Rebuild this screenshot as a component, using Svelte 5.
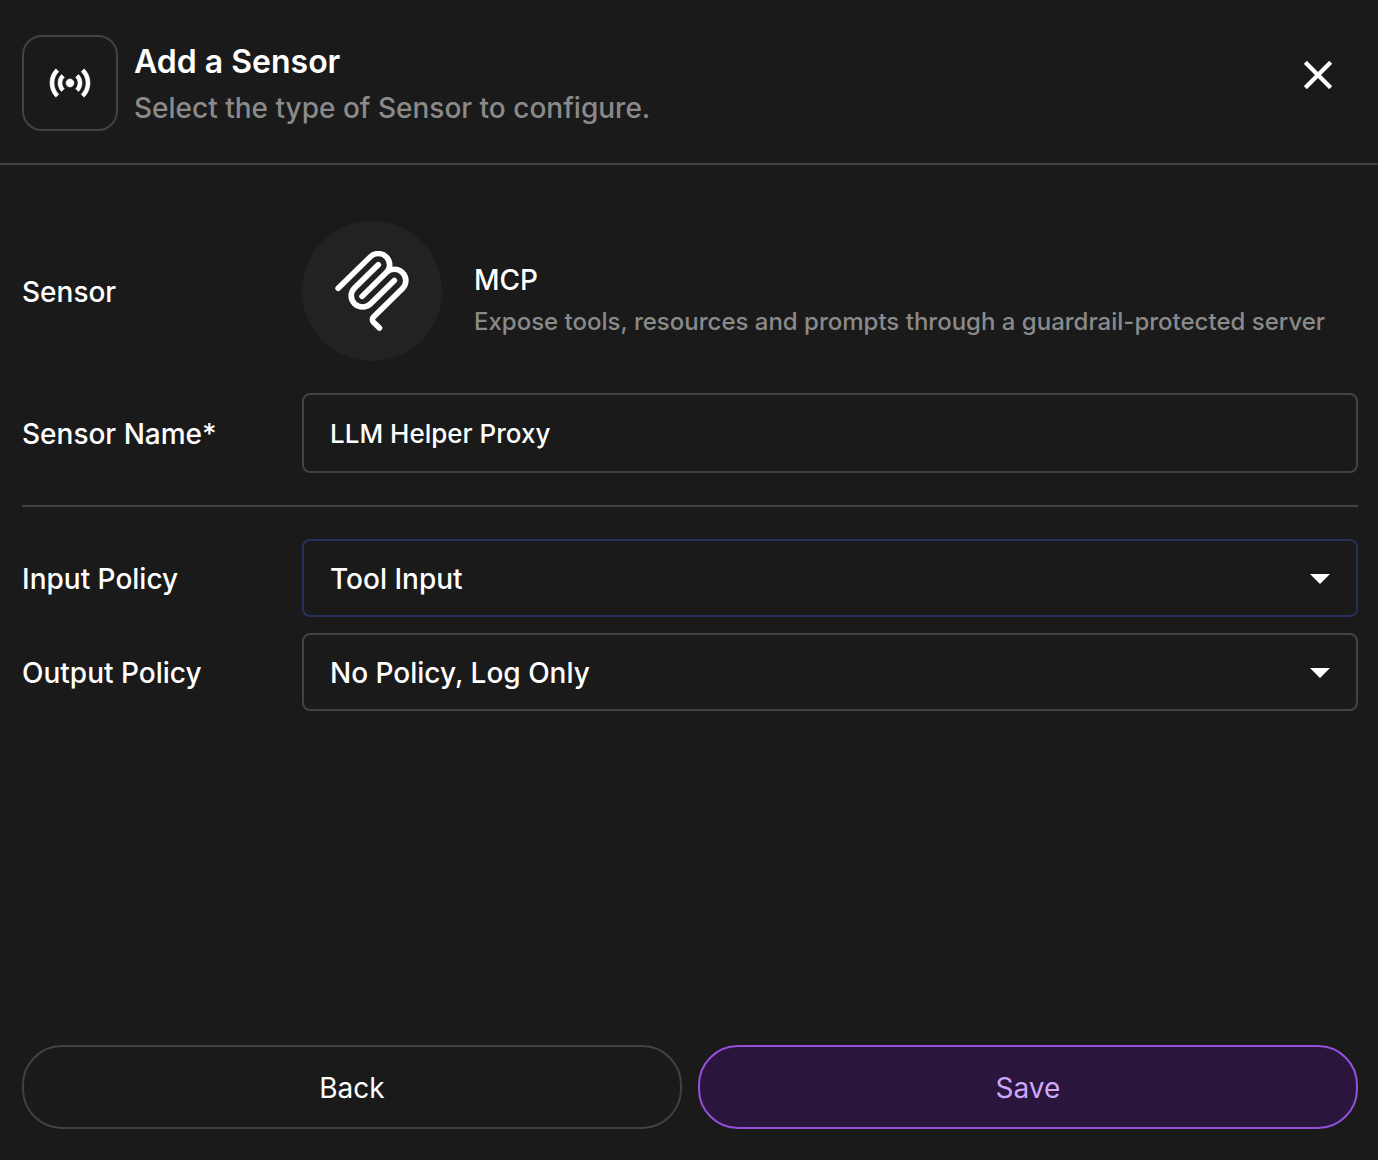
<script lang="ts">
	const policies = ['No Policy, Log Only', 'Tool Input', 'Tool Output'];

	let sensorName = $state('LLM Helper Proxy');
	let inputPolicy = $state('Tool Input');
	let outputPolicy = $state('No Policy, Log Only');
</script>

{#snippet arrow()}
	<svg class="arrow" viewBox="0 0 24 24" aria-hidden="true">
		<path d="M7 10l5 5 5-5z" />
	</svg>
{/snippet}

<form class="dialog" onsubmit={(e) => e.preventDefault()}>
	<header class="header">
		<div class="header-icon">
			<svg viewBox="0 0 24 24" aria-hidden="true">
				<path
					d="M7.76 16.24C6.67 15.16 6 13.66 6 12s.67-3.16 1.76-4.24l1.42 1.42C8.45 9.9 8 10.9 8 12c0 1.1.45 2.1 1.17 2.83l-1.41 1.41zm8.48 0C17.33 15.16 18 13.66 18 12s-.67-3.16-1.76-4.24l-1.42 1.42C15.55 9.9 16 10.9 16 12c0 1.1-.45 2.1-1.17 2.83l1.41 1.41zM12 10c-1.1 0-2 .9-2 2s.9 2 2 2 2-.9 2-2-.9-2-2-2zm8 2c0 2.21-.9 4.21-2.35 5.65l1.42 1.42C20.88 17.26 22 14.76 22 12s-1.12-5.26-2.93-7.07l-1.42 1.42C19.1 7.79 20 9.79 20 12zM6.35 6.35L4.93 4.93C3.12 6.74 2 9.24 2 12s1.12 5.26 2.93 7.07l1.42-1.42C4.9 16.21 4 14.21 4 12s.9-4.21 2.35-5.65z"
				/>
			</svg>
		</div>
		<div class="header-text">
			<h1>Add a Sensor</h1>
			<p>Select the type of Sensor to configure.</p>
		</div>
		<button class="close" type="button" aria-label="Close">
			<svg viewBox="0 0 24 24" aria-hidden="true">
				<path
					d="M19 6.41L17.59 5 12 10.59 6.41 5 5 6.41 10.59 12 5 17.59 6.41 19 12 13.41 17.59 19 19 17.59 13.41 12z"
				/>
			</svg>
		</button>
	</header>

	<div class="body">
		<div class="row">
			<span class="label">Sensor</span>
			<div class="sensor">
				<div class="sensor-logo">
					<svg viewBox="0 0 24 24" aria-hidden="true">
						<path
							d="M15.688 2.343a2.588 2.588 0 00-3.61 0l-9.626 9.44a.863.863 0 01-1.203 0 .823.823 0 010-1.18l9.626-9.44a4.313 4.313 0 016.016 0 4.116 4.116 0 011.204 3.54 4.3 4.3 0 013.609 1.18l.05.05a4.115 4.115 0 010 5.9l-8.706 8.537a.274.274 0 000 .393l1.788 1.754a.823.823 0 010 1.18.863.863 0 01-1.203 0l-1.788-1.753a1.92 1.92 0 010-2.754l8.706-8.538a2.47 2.47 0 000-3.54l-.05-.049a2.588 2.588 0 00-3.607-.003l-7.172 7.034-.002.002-.098.097a.863.863 0 01-1.204 0 .823.823 0 010-1.18l7.273-7.133a2.47 2.47 0 00-.003-3.537z"
						/>
						<path
							d="M14.485 4.703a.823.823 0 000-1.18.863.863 0 00-1.204 0l-7.119 6.982a4.115 4.115 0 000 5.9 4.314 4.314 0 006.016 0l7.12-6.982a.823.823 0 000-1.18.863.863 0 00-1.204 0l-7.119 6.982a2.588 2.588 0 01-3.61 0 2.47 2.47 0 010-3.54l7.12-6.982z"
						/>
					</svg>
				</div>
				<div class="sensor-text">
					<h2>MCP</h2>
					<p>Expose tools, resources and prompts through a guardrail-protected server</p>
				</div>
			</div>
		</div>

		<div class="row">
			<label class="label" for="sensor-name">Sensor Name*</label>
			<input id="sensor-name" class="field name" type="text" bind:value={sensorName} />
		</div>

		<hr />

		<div class="policies">
			<div class="row">
				<label class="label" for="input-policy">Input Policy</label>
				<div class="select">
					<select id="input-policy" class="field active" bind:value={inputPolicy}>
						{#each policies as policy}
							<option value={policy}>{policy}</option>
						{/each}
					</select>
					{@render arrow()}
				</div>
			</div>
			<div class="row">
				<label class="label" for="output-policy">Output Policy</label>
				<div class="select">
					<select id="output-policy" class="field" bind:value={outputPolicy}>
						{#each policies as policy}
							<option value={policy}>{policy}</option>
						{/each}
					</select>
					{@render arrow()}
				</div>
			</div>
		</div>
	</div>

	<footer class="footer">
		<button class="btn" type="button">Back</button>
		<button class="btn primary" type="submit">Save</button>
	</footer>
</form>

<style>
	:global(body) {
		margin: 0;
		background: #1a1a1a;
	}

	.dialog {
		display: flex;
		flex-direction: column;
		box-sizing: border-box;
		min-height: 100vh;
		background: #1a1a1a;
		color: #fff;
		font-family: Inter, 'Liberation Sans', sans-serif;
		font-size: 28px;
		font-weight: 500;
	}

	h1,
	h2,
	p {
		margin: 0;
	}

	svg {
		display: block;
		fill: currentColor;
	}

	.header {
		display: flex;
		align-items: center;
		gap: 16px;
		padding: 35px 36px 32px 22px;
		border-bottom: 2px solid #424242;
	}

	.header-icon {
		display: flex;
		align-items: center;
		justify-content: center;
		flex: none;
		box-sizing: border-box;
		width: 96px;
		height: 96px;
		border: 2px solid #424242;
		border-radius: 20px;
	}

	.header-icon svg {
		width: 48px;
		height: 48px;
		stroke: currentColor;
		stroke-width: 0.3;
	}

	.header-text {
		flex: 1;
		padding-top: 2px;
	}

	h1 {
		font-size: 32px;
		font-weight: 600;
		line-height: 48px;
	}

	.header-text p {
		color: #8a8a8a;
		line-height: 44px;
	}

	.close {
		align-self: flex-start;
		padding: 16px 0;
		border: none;
		background: none;
		color: inherit;
		cursor: pointer;
	}

	.close svg {
		width: 48px;
		height: 48px;
		stroke: currentColor;
		stroke-width: 0.2;
	}

	.body {
		display: flex;
		flex-direction: column;
		gap: 32px;
		flex: 1;
		padding: 56px 20px 32px 22px;
	}

	.row {
		display: grid;
		grid-template-columns: 280px minmax(0, 1fr);
		align-items: center;
	}

	.label {
		padding-top: 2px;
		line-height: 40px;
	}

	.sensor {
		display: flex;
		align-items: center;
		gap: 32px;
	}

	.sensor-logo {
		display: flex;
		align-items: center;
		justify-content: center;
		flex: none;
		width: 140px;
		height: 140px;
		border-radius: 50%;
		background: #222;
	}

	.sensor-logo svg {
		width: 80px;
		height: 80px;
	}

	.sensor-text {
		padding-top: 20px;
		line-height: 42px;
	}

	h2 {
		font-size: 28px;
		font-weight: 500;
	}

	.sensor-text p {
		color: #8a8a8a;
		font-size: 24px;
	}

	.field {
		box-sizing: border-box;
		width: 100%;
		height: 78px;
		padding: 2px 26px 0;
		border: 2px solid #424242;
		border-radius: 8px;
		outline: none;
		background: transparent;
		color: inherit;
		font: inherit;
	}

	.field.name {
		height: 80px;
		padding-top: 0;
		font-size: 26px;
	}

	.field.active {
		border-color: #27315c;
	}

	hr {
		width: 100%;
		margin: 0;
		border: none;
		border-top: 2px solid #424242;
	}

	.policies {
		display: flex;
		flex-direction: column;
		gap: 16px;
	}

	.select {
		display: grid;
		position: relative;
	}

	select.field {
		appearance: none;
		cursor: pointer;
	}

	option {
		background: #1a1a1a;
	}

	.arrow {
		position: absolute;
		top: 15px;
		right: 14px;
		width: 48px;
		height: 48px;
		pointer-events: none;
	}

	.footer {
		display: flex;
		gap: 16px;
		padding: 0 20px 31px 22px;
	}

	.btn {
		flex: 1;
		height: 84px;
		padding: 2px 24px 0;
		border: 2px solid #424242;
		border-radius: 40px;
		background: transparent;
		color: #fff;
		font: inherit;
		font-weight: 400;
		cursor: pointer;
	}

	.btn.primary {
		border-color: #9550dc;
		background: #2a153d;
		color: #d0a6fb;
	}
</style>
